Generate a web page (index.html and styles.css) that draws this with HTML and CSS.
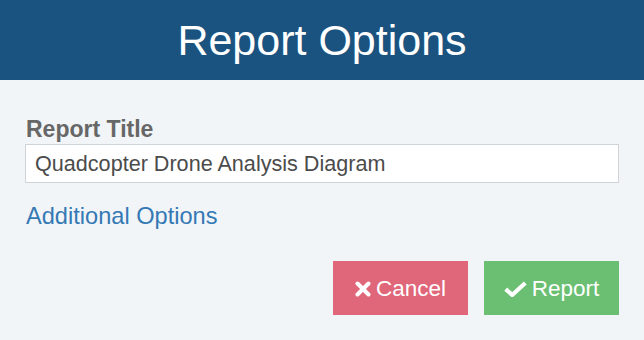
FILE: index.html
```html
<!DOCTYPE html>
<html>
<head>
<meta charset="utf-8">
<link rel="stylesheet" href="styles.css">
</head>
<body>
<div class="dialog">
  <header class="head"><h1 class="title">Report Options</h1></header>
  <main class="body">
    <label class="label" for="t">Report Title</label>
    <input id="t" class="input" type="text" value="Quadcopter Drone Analysis Diagram">
    <a class="link" href="#">Additional Options</a>
    <div class="actions">
      <button class="btn btn-cancel"><svg class="ico-x" viewBox="0 0 16 16" width="16" height="16"><path d="M2.5 2.5 L13.5 13.5 M13.5 2.5 L2.5 13.5" stroke="#fff" stroke-width="4" stroke-linecap="round"/></svg>Cancel</button>
      <button class="btn btn-report"><svg class="ico-check" viewBox="0 0 24 16" width="23" height="16"><path d="M1.8 8.2 L8.5 14.2 L22.2 1.8" fill="none" stroke="#fff" stroke-width="4.4" stroke-linejoin="miter"/></svg>Report</button>
    </div>
  </main>
</div>
</body>
</html>
```
FILE: styles.css
```css
* { box-sizing: border-box; }
html, body { margin: 0; padding: 0; }
body {
  width: 644px;
  height: 340px;
  background: #f1f5f8;
  font-family: "Liberation Sans", Arial, sans-serif;
  overflow: hidden;
}
.head {
  height: 80px;
  background: #1b5380;
  display: flex;
  align-items: center;
  justify-content: center;
}
.title {
  margin: 0;
  color: #fff;
  font-weight: normal;
  font-size: 43px;
  line-height: 48px;
}
.body {
  padding: 0 25px;
  display: flex;
  flex-direction: column;
}
.label {
  margin-top: 36px;
  font-weight: bold;
  font-size: 23px;
  line-height: 26px;
  color: #676767;
  padding-left: 1px;
}
.input {
  margin-top: 2px;
  height: 39px;
  width: 594px;
  border: 1px solid #cfd4d8;
  background: #fff;
  font-family: inherit;
  font-size: 21.6px;
  color: #4b4b4b;
  padding: 0 9px;
  outline: none;
}
.link {
  margin-top: 19px;
  font-size: 23.6px;
  line-height: 28px;
  color: #3579b4;
  text-decoration: none;
  align-self: flex-start;
  padding-left: 1px;
}
.actions {
  display: flex;
  justify-content: flex-end;
  gap: 16px;
  margin-top: 31px;
}
.btn {
  width: 135px;
  height: 54px;
  border: 0;
  border-radius: 0;
  color: #fff;
  font-family: inherit;
  font-size: 22.5px;
  display: flex;
  align-items: center;
  justify-content: center;
  gap: 5px;
  padding: 0;
  padding-top: 1px;
}
.btn-cancel { background: #e0677a; }
.btn-report { background: #6bbf73; }
.ico-x { margin-right: 0; }
.ico-check { margin-right: 0; }
```
